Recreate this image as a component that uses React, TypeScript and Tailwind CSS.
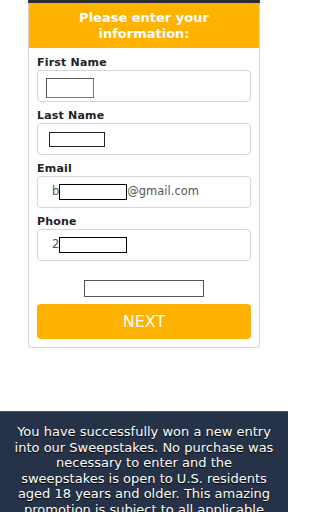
import React from 'react';

const font = { fontFamily: '"DejaVu Sans", Verdana, sans-serif' };

const Field = ({ label, first, children }: { label: string; first?: boolean; children: React.ReactNode }) => (
  <div className={first ? '' : 'mt-[7px]'}>
    <label className="block text-[11px] leading-[14px] font-bold text-[#222] tracking-[0.2px]">{label}</label>
    <div className="h-8 rounded-[4px] border border-[#d6d6d6] bg-white">{children}</div>
  </div>
);

const App = () => {
  return (
    <div className="w-[288px] h-[512px] overflow-hidden bg-white flex flex-col" style={font}>
      {/* Form card */}
      <div className="mx-[28px] w-[232px] border-x border-b border-[#d4d4d4] rounded-b-[4px]">
        <div className="h-[3px] bg-[#2a2d31] -mx-px" />
        <div className="bg-[#ffb300] h-[45px] flex items-center justify-center px-4">
          <h1 className="text-center text-white font-bold text-[13px] leading-[15.5px]">
            Please enter your information:
          </h1>
        </div>

        <div className="px-2 pt-2 pb-2">
          <Field label="First Name" first>
            <div className="pl-2 pt-[7px]">
              <div className="w-12 h-5 border border-[#777] border-t-[#555] border-l-[#555]" />
            </div>
          </Field>
          <Field label="Last Name">
            <div className="h-full flex items-center pl-[11px]">
              <div className="w-14 h-[15px] border border-[#222]" />
            </div>
          </Field>
          <Field label="Email">
            <div className="h-full flex items-center pl-[14px] text-[11.5px] text-[#555]">
              <span>b</span>
              <div className="w-[68px] h-4 border border-black" />
              <span>@gmail.com</span>
            </div>
          </Field>
          <Field label="Phone">
            <div className="h-full flex items-center pl-[14px] text-[11.5px] text-[#555]">
              <span>2</span>
              <div className="w-[68px] h-4 border border-black" />
            </div>
          </Field>

          <div className="mt-[19px] flex justify-center">
            <div className="w-[120px] h-[17px] border border-[#555]" />
          </div>

          <button className="mt-[7px] w-full h-[35px] rounded-[4px] bg-[#ffb300] text-white text-[16px]">
            NEXT
          </button>
        </div>
      </div>

      {/* Footer */}
      <div className="mt-[63px] flex-1 bg-[#263247] border-t border-[#4a5466] px-[13px] pt-[12px] pb-4">
        <p className="text-center text-white text-[13px] leading-[15.5px] [text-shadow:0_1px_1px_#000]">
          You have successfully won a new entry into our Sweepstakes. No purchase was necessary to enter and the
          sweepstakes is open to U.S. residents aged 18 years and older. This amazing promotion is subject to all
          applicable federal, state and local laws.
        </p>
      </div>
    </div>
  );
};

export default App;
